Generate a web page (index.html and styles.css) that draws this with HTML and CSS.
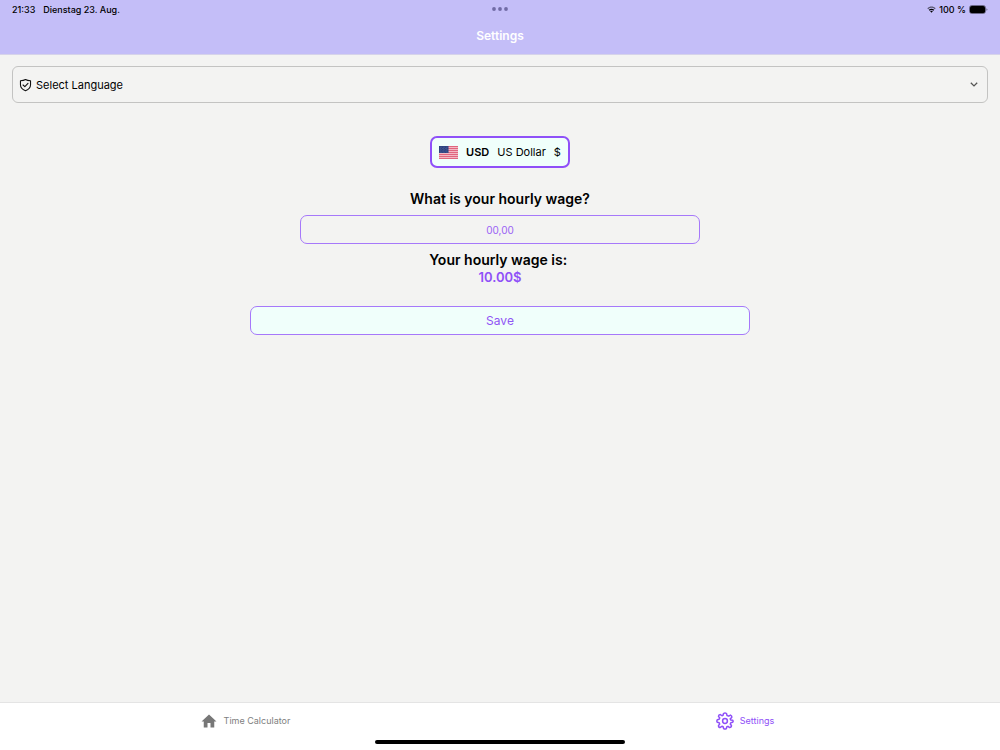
FILE: index.html
```html
<!DOCTYPE html>
<html lang="en">
<head>
<meta charset="utf-8">
<meta name="viewport" content="width=device-width, initial-scale=1">
<title>Settings</title>
<link rel="stylesheet" href="styles.css">
</head>
<body>
<header class="header">
  <div class="status">
    <div class="status-side"><span>21:33</span><span lang="de">Dienstag 23. Aug.</span></div>
    <svg class="dots" viewBox="0 0 16 4" aria-hidden="true"><circle cx="2" cy="2" r="1.9"/><circle cx="8" cy="2" r="1.9"/><circle cx="14" cy="2" r="1.9"/></svg>
    <div class="status-side status-right">
      <svg class="wifi" viewBox="0 0 16 12" aria-hidden="true"><path opacity=".55" d="M0.6 3.9C4.8-.3 11.2-.3 15.4 3.9L13.9 5.5C10.5 2.2 5.5 2.2 2.1 5.5Z"/><path d="M3.1 6.5C5.9 3.8 10.1 3.8 12.9 6.5L11.4 8.1C9.4 6.3 6.6 6.3 4.6 8.1Z"/><path d="M5.6 9.1C7 7.9 9 7.9 10.4 9.1L8 11.6Z"/></svg>
      <span>100 %</span>
      <svg class="battery" viewBox="0 0 19 9" aria-hidden="true"><rect x=".5" y=".5" width="16" height="8" rx="2.3" fill="none" stroke="#000" stroke-opacity=".45"/><rect x="1" y="1" width="15" height="7" rx="1.6"/><path opacity=".45" d="M17.4 3.2Q19.6 4.5 17.4 5.8Z"/></svg>
    </div>
  </div>
  <h1 class="title">Settings</h1>
</header>

<main class="main">
  <div class="language">
    <svg class="shield" viewBox="0 0 24 24" aria-hidden="true"><path d="M12 1.8C9.4 3.5 6.3 4.1 2.7 4.2V11.5C2.7 17 6.4 20.4 12 22.6C17.6 20.4 21.3 17 21.3 11.5V4.2C17.7 4.1 14.6 3.5 12 1.8Z"/><path d="M7.5 12L10.8 15.2L16.6 9"/></svg>
    <select class="language-select" aria-label="Select Language"><option>Select Language</option></select>
    <svg class="chevron" viewBox="0 0 8 5" aria-hidden="true"><path d="M.8.7L4 3.9L7.2.7"/></svg>
  </div>

  <button class="currency" type="button">
    <svg class="flag" viewBox="0 0 38 26" aria-hidden="true">
      <rect width="38" height="26" fill="#f3b9c4"/>
      <path stroke="#e0677e" stroke-width="2" d="M0 1H38M0 5H38M0 9H38M0 13H38M0 17H38M0 21H38M0 25H38"/>
      <rect width="19" height="14" fill="#2d4380"/>
      <path stroke="#7486b5" stroke-width="1" stroke-dasharray="1 2" d="M2 2.5H18M3 5H18M2 7.5H18M3 10H18M2 12.5H18"/>
    </svg>
    <strong class="code">USD</strong><span>US Dollar</span><span>$</span>
  </button>

  <form class="wage">
    <label class="question" for="wage">What is your hourly wage?</label>
    <input class="wage-input" id="wage" type="text" inputmode="decimal" placeholder="00,00">
    <p class="question">Your hourly wage is: </p>
    <p class="amount">10.00$</p>
    <button class="save" type="button">Save</button>
  </form>
</main>

<footer class="footer">
  <nav class="tabs">
    <a class="tab" href="#calculator"><svg class="tab-icon home" viewBox="0 0 24 24" aria-hidden="true"><path d="M10 20.5V14.5H14V20.5H19V12.5H22L12 3.3L2 12.5H5V20.5Z"/></svg>Time Calculator</a>
    <a class="tab active" href="#settings" aria-current="page"><svg class="tab-icon gear" viewBox="0 0 24 24" aria-hidden="true"><circle cx="12" cy="12" r="3.2"/><path d="M10 2Q12 .4 14 2L14.7 4.6L17 5.5L19.3 4.1Q21.5 5 20.9 7.3L19 9.2L19.8 10.7L22.2 11.1Q23.4 12.5 22.2 13.8L19.8 14.3L19 16L20.6 18.1Q20.6 20.6 18.2 20.7L16 19.1L14.5 19.7L13.8 22.1Q12 23.5 10.2 22.1L9.5 19.7L7.9 19L5.8 20.6Q3.3 20.6 3.3 18.2L4.9 16L4.2 14.3L1.8 13.8Q.5 12 1.8 10.2L4.2 9.6L5 8L3.3 5.8Q3.4 3.4 5.8 3.4L8 5L9.4 4.4Z"/></svg>Settings</a>
  </nav>
  <div class="home-indicator"></div>
</footer>
</body>
</html>
```
FILE: styles.css
```css
* { box-sizing: border-box; }

body {
  margin: 0;
  min-height: 100vh;
  display: flex;
  flex-direction: column;
  background: #f3f3f2;
  color: #000;
  font-family: Inter, "Liberation Sans", sans-serif;
  font-size: 11px;
}

button, input, select { font: inherit; color: inherit; }
h1, p { margin: 0; }

.header {
  background: #c4bef8;
  border-bottom: 1px solid #d6d3ea;
}

.status {
  display: flex;
  align-items: center;
  height: 18px;
  padding: 0 12px;
  font-size: 9px;
  font-weight: 500;
}

.status-side { flex: 1; display: flex; align-items: center; gap: 8px; }
.status-right { justify-content: flex-end; gap: 3px; }
.dots { width: 16px; height: 4px; fill: #716ba5; }
.wifi { width: 9px; height: 7px; }
.battery { width: 19px; height: 9px; }

.title {
  padding: 10px 0;
  line-height: 16px;
  text-align: center;
  font-size: 12px;
  font-weight: 600;
  color: #fff;
}

.main {
  flex: 1;
  display: flex;
  flex-direction: column;
  align-items: center;
  padding: 11px 12px;
}

.language {
  align-self: stretch;
  display: flex;
  align-items: center;
  height: 37px;
  padding: 0 9px 0 6px;
  border: 1px solid #c3c3c2;
  border-radius: 6px;
}

.shield { width: 13px; height: 14px; fill: none; stroke: #111; stroke-width: 2; stroke-linejoin: round; stroke-linecap: round; }
.language-select { flex: 1; height: 35px; padding: 0 4px; border: 0; background: none; appearance: none; }
.chevron { width: 8px; height: 5px; fill: none; stroke: #555; stroke-width: 1.3; }

.currency {
  display: flex;
  align-items: center;
  gap: 8px;
  height: 32px;
  margin-top: 33px;
  padding: 0 7px;
  border: 2px solid #8f50f8;
  border-radius: 7px;
  background: #f0fffb;
}

.flag { width: 19px; height: 13px; }
.code { font-weight: 600; }

.wage {
  align-self: stretch;
  display: flex;
  flex-direction: column;
  align-items: center;
  padding-top: 22px;
}

.question {
  white-space: pre;
  font-size: 14px;
  line-height: 18px;
  font-weight: 600;
}

.wage-input {
  width: 40vw;
  height: 29px;
  margin: 7px 0;
  border: 1px solid #a678fa;
  border-radius: 7px;
  background: none;
  text-align: center;
  font-size: 10px;
}

.wage-input::placeholder { color: #9a62f5; opacity: 1; }

.amount {
  line-height: 16px;
  font-size: 13px;
  font-weight: 600;
  color: #8f50f8;
}

.save {
  width: 50vw;
  height: 29px;
  margin-top: 21px;
  padding: 0;
  border: 1px solid #a678fa;
  border-radius: 7px;
  background: #f0fffb;
  color: #9056f5;
  font-size: 12px;
}

.footer {
  background: #fff;
  border-top: 1px solid #e4e4e4;
  padding-bottom: 6px;
}

.tabs { display: flex; height: 37px; }

.tab {
  flex: 1;
  display: flex;
  align-items: center;
  justify-content: center;
  gap: 6px;
  padding: 0 10px 2px 0;
  font-size: 9px;
  color: #808080;
  text-decoration: none;
}

.active { color: #8f50f8; }
.tab-icon { width: 18px; height: 18px; }
.home { fill: #777; }
.gear { fill: none; stroke: #8f50f8; stroke-width: 2; stroke-linejoin: round; }

.home-indicator {
  width: 25%;
  height: 4px;
  margin: 0 auto;
  border-radius: 2px;
  background: #000;
}
```
